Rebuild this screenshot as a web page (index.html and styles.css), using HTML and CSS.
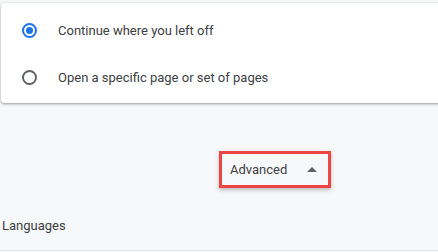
FILE: index.html
```html
<!DOCTYPE html>
<html lang="en">
    <head>
        <meta charset="UTF-8">
        <title>Settings</title>
        <link rel="stylesheet" href="styles.css">
    </head>
    <body>
        <main class="page">
            <section class="card">
                <label class="option">
                    <span class="radio checked"></span>
                    <span class="option-text">Continue where you left off</span>
                </label>
                <label class="option">
                    <span class="radio"></span>
                    <span class="option-text">Open a specific page or set of pages</span>
                </label>
            </section>
            <div class="advanced-row">
                <button class="advanced-btn">
                    <span>Advanced</span>
                    <span class="arrow"></span>
                </button>
            </div>
            <h2 class="section-title">Languages</h2>
            <div class="divider"></div>
        </main>
    </body>
</html>
```

FILE: styles.css
```css
body {
    margin: 0;
    background-color: #f7f8f9;
    font-family: Roboto, "Liberation Sans", sans-serif;
    overflow: hidden;
}

.page {
    width: 438px;
    height: 252px;
}

.card {
    background-color: white;
    margin: 3px -10px 0 1px;
    padding: 4px 0 0;
    height: 96px;
    border-radius: 4px;
    box-shadow: 0 1px 2px rgba(60,64,67,0.35), 0 1px 3px 1px rgba(60,64,67,0.15);
}

.option {
    display: flex;
    align-items: center;
    height: 47px;
    padding-left: 21px;
}

.radio {
    width: 11px;
    height: 11px;
    border: 2px solid #5f6368;
    border-radius: 50%;
    position: relative;
    margin-right: 21px;
}

.radio.checked {
    border-color: #1a73e8;
}

.radio.checked::after {
    content: "";
    position: absolute;
    left: 2px;
    top: 2px;
    width: 7px;
    height: 7px;
    border-radius: 50%;
    background-color: #1a73e8;
}

.option-text {
    font-size: 13px;
    color: #3c4043;
}

.advanced-row {
    padding: 48px 0 0 219px;
}

.advanced-btn {
    display: flex;
    align-items: center;
    justify-content: space-between;
    width: 112px;
    height: 37px;
    padding: 0 8px 0 8px;
    background: transparent;
    border: 3px solid #ef4444;
    font-family: inherit;
    font-size: 13px;
    color: #3c4043;
    box-shadow: 0 2px 4px rgba(0,0,0,0.25);
}

.arrow {
    width: 0;
    height: 0;
    border-left: 5px solid transparent;
    border-right: 5px solid transparent;
    border-bottom: 5px solid #5f6368;
    margin-right: 3px;
}

.section-title {
    margin: 30px 0 0 2px;
    font-size: 13px;
    font-weight: normal;
    color: #3c4043;
}

.divider {
    margin-top: 17px;
    height: 1px;
    background-color: #e2e4e6;
}
```
